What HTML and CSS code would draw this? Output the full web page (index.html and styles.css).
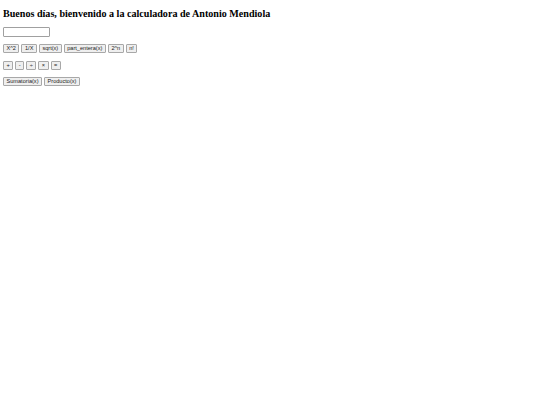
FILE: index.html
```html
<!DOCTYPE html>
<html lang="es">
<head>
    <meta charset="UTF-8">
    <meta name="viewport" content="width=device-width, initial-scale=1.0">
    <title>Calculadora</title>
    <link rel="stylesheet" href="styles.css">
</head>
<body>
    <h2 class="title">Buenos días, bienvenido a la calculadora de Antonio Mendiola</h2>

    <div class="display-row">
        <input type="text" id="display" class="display">
    </div>

    <div class="button-row">
        <button>X^2</button>
        <button>1/X</button>
        <button>sqrt(x)</button>
        <button>part_entera(x)</button>
        <button>2^n</button>
        <button>n!</button>
    </div>

    <div class="button-row">
        <button>+</button>
        <button>-</button>
        <button>÷</button>
        <button>×</button>
        <button>=</button>
    </div>

    <div class="button-row">
        <button>Sumatoria(x)</button>
        <button>Producto(x)</button>
    </div>
</body>
</html>
```

FILE: styles.css
```css
/* Small, plain calculator layout */
body {
    margin: 3px;
    font-family: "Liberation Sans", Arial, sans-serif;
    background: white;
    color: black;
}

.title {
    font-family: "Liberation Serif", "Times New Roman", serif;
    font-size: 10.1px;
    font-weight: bold;
    margin: 5px 0 8px;
}

.display-row {
    margin-bottom: 7px;
}

.display {
    display: block;
    width: 47px;
    height: 10px;
    padding: 0;
    border: 1px solid #a0a0a0;
    border-radius: 1px;
    box-sizing: border-box;
}

.button-row {
    display: flex;
    gap: 2px;
    margin-bottom: 7.5px;
}

button {
    font-family: "Liberation Sans", Arial, sans-serif;
    font-size: 5.6px;
    height: 9px;
    line-height: 7px;
    padding: 0 2.5px;
    color: #222;
    background: #efefef;
    border: 1px solid #a8a8a8;
    border-radius: 1px;
}
```
